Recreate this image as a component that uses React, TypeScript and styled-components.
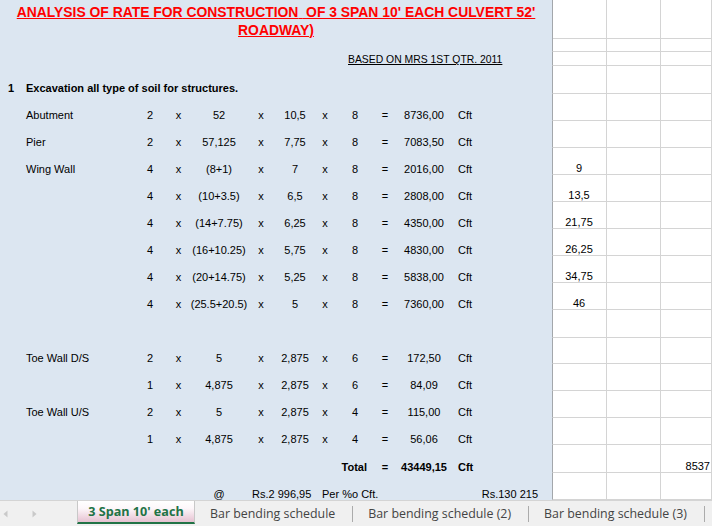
import React from "react";
import styled, { createGlobalStyle } from "styled-components";

const GlobalStyle = createGlobalStyle`
  html, body { margin: 0; padding: 0; background: #ffffff; }
  body {
    font-family: "Liberation Sans", Arial, sans-serif;
    font-size: 11px;
    color: #000000;
  }
  * { box-sizing: border-box; }
`;

const BAND_COLS =
  "22px 113px 30px 27px 54px 30px 38px 22px 38px 22px 56px 100px";

type Align = "left" | "center" | "right";
const justify = (a?: Align) =>
  a === "left" ? "flex-start" : a === "right" ? "flex-end" : "center";

const Window = styled.div`
  width: 712px;
  height: 526px;
  display: flex;
  flex-direction: column;
  overflow: hidden;
  background: #ffffff;
`;

const Sheet = styled.div`
  flex: 1;
  min-height: 0;
  display: flex;
  flex-direction: column;
  overflow: hidden;
`;

const Row = styled.div<{ $h: number }>`
  flex: none;
  height: ${(p) => p.$h}px;
  display: grid;
  grid-template-columns: 552px 55px 54px 1fr;
`;

const Band = styled.div`
  display: grid;
  grid-template-columns: ${BAND_COLS};
  grid-template-rows: 100%;
  align-items: end;
  background: #dce6f1;
  min-width: 0;
`;

const Cell = styled.div<{
  $col: string;
  $align?: Align;
  $bold?: boolean;
  $under?: boolean;
  $small?: boolean;
  $pl?: number;
  $pr?: number;
}>`
  grid-column: ${(p) => p.$col};
  grid-row: 1;
  display: flex;
  justify-content: ${(p) => justify(p.$align)};
  padding-left: ${(p) => p.$pl ?? 0}px;
  padding-right: ${(p) => p.$pr ?? 0}px;
  font-weight: ${(p) => (p.$bold ? 700 : 400)};
  font-size: ${(p) => (p.$small ? "10.4px" : "11px")};
  text-decoration: ${(p) => (p.$under ? "underline" : "none")};
  line-height: 12px;
  white-space: nowrap;
`;

const Title = styled.div`
  grid-column: 1 / 13;
  grid-row: 1;
  align-self: start;
  padding-top: 3px;
  text-align: center;
  color: #ff0000;
  font-weight: 700;
  font-size: 13.9px;
  line-height: 18px;
  text-decoration: underline;
`;

const GridCell = styled.div<{ $edge?: boolean; $align?: Align }>`
  display: flex;
  align-items: flex-end;
  justify-content: ${(p) => justify(p.$align)};
  border-left: ${(p) => (p.$edge ? "1px solid #a3a7ab" : "none")};
  border-right: 1px solid #d4d4d4;
  border-bottom: 1px solid #d4d4d4;
  padding: 0 1px 0 0;
  line-height: 12px;
  white-space: nowrap;
  overflow: hidden;
`;

const TabBar = styled.div`
  flex: none;
  height: 26px;
  display: flex;
  align-items: stretch;
  background: #f0f0f0;
  border-top: 1px solid #d4d4d4;
  font-family: "Open Sans", "Noto Sans", sans-serif;
  font-size: 12.4px;
`;

const Nav = styled.div`
  width: 77px;
  flex: none;
  display: flex;
  align-items: center;
  gap: 24px;
  padding: 0 0 0 3px;
`;

const ActiveTab = styled.div`
  flex: none;
  align-self: flex-start;
  width: 118px;
  height: 23px;
  display: flex;
  align-items: center;
  justify-content: center;
  background: linear-gradient(#ffffff 0%, #fdf7fa 35%, #e6c1d1 100%);
  border-left: 1px solid #c8c8c8;
  border-right: 1px solid #c8c8c8;
  border-bottom: 2px solid #217346;
  color: #217346;
  font-weight: 700;
  font-size: 12.6px;
  white-space: nowrap;
`;

const Tab = styled.div`
  flex: none;
  display: flex;
  align-items: center;
  padding: 0 17px 1px 15px;
  color: #444444;
  white-space: nowrap;
`;

const Sep = styled.div`
  flex: none;
  width: 1px;
  height: 16px;
  align-self: center;
  background: #ababab;
`;

const Arrow = ({ dir }: { dir: "l" | "r" }) => (
  <svg width="5" height="8" viewBox="0 0 5 8">
    <path
      d={dir === "l" ? "M4.5 0.5 L0.5 4 L4.5 7.5 Z" : "M0.5 0.5 L4.5 4 L0.5 7.5 Z"}
      fill="#c9c9c9"
    />
  </svg>
);

type Calc = {
  h: number;
  label?: string;
  n: string;
  a: string;
  b: string;
  c: string;
  res: string;
  side?: string;
};

const calcs: Calc[] = [
  { h: 27, label: "Abutment", n: "2", a: "52", b: "10,5", c: "8", res: "8736,00" },
  { h: 27, label: "Pier", n: "2", a: "57,125", b: "7,75", c: "8", res: "7083,50" },
  { h: 27, label: "Wing Wall", n: "4", a: "(8+1)", b: "7", c: "8", res: "2016,00", side: "9" },
  { h: 27, n: "4", a: "(10+3.5)", b: "6,5", c: "8", res: "2808,00", side: "13,5" },
  { h: 27, n: "4", a: "(14+7.75)", b: "6,25", c: "8", res: "4350,00", side: "21,75" },
  { h: 27, n: "4", a: "(16+10.25)", b: "5,75", c: "8", res: "4830,00", side: "26,25" },
  { h: 27, n: "4", a: "(20+14.75)", b: "5,25", c: "8", res: "5838,00", side: "34,75" },
  { h: 27, n: "4", a: "(25.5+20.5)", b: "5", c: "8", res: "7360,00", side: "46" },
];

const toeCalcs: Calc[] = [
  { h: 26, label: "Toe Wall D/S", n: "2", a: "5", b: "2,875", c: "6", res: "172,50" },
  { h: 27, n: "1", a: "4,875", b: "2,875", c: "6", res: "84,09" },
  { h: 27, label: "Toe Wall U/S", n: "2", a: "5", b: "2,875", c: "4", res: "115,00" },
  { h: 27, n: "1", a: "4,875", b: "2,875", c: "4", res: "56,06" },
];

const SideCells = ({ a, c }: { a?: string; c?: string }) => (
  <>
    <GridCell $edge>{a}</GridCell>
    <GridCell />
    <GridCell $align="right">{c}</GridCell>
  </>
);

const CalcRow = ({ r }: { r: Calc }) => (
  <Row $h={r.h}>
    <Band>
      {r.label && (
        <Cell $col="2" $align="left" $pl={4}>
          {r.label}
        </Cell>
      )}
      <Cell $col="3">{r.n}</Cell>
      <Cell $col="4">x</Cell>
      <Cell $col="5">{r.a}</Cell>
      <Cell $col="6">x</Cell>
      <Cell $col="7">{r.b}</Cell>
      <Cell $col="8">x</Cell>
      <Cell $col="9">{r.c}</Cell>
      <Cell $col="10">=</Cell>
      <Cell $col="11">{r.res}</Cell>
      <Cell $col="12" $align="left" $pl={6}>
        Cft
      </Cell>
    </Band>
    <SideCells a={r.side} />
  </Row>
);

export default function App() {
  return (
    <>
      <GlobalStyle />
      <Window>
        <Sheet>
          <Row $h={38}>
            <Band>
              <Title>
                ANALYSIS OF RATE FOR CONSTRUCTION{"\u00a0"} OF 3 SPAN 10' EACH
                CULVERT 52' ROADWAY)
              </Title>
            </Band>
            <SideCells />
          </Row>
          <Row $h={14}>
            <Band />
            <SideCells />
          </Row>
          <Row $h={14}>
            <Band>
              <Cell $col="8 / 13" $align="left" $pl={34} $under $small>
                BASED ON MRS 1ST QTR. 2011
              </Cell>
            </Band>
            <SideCells />
          </Row>
          <Row $h={28}>
            <Band>
              <Cell $col="1" $align="left" $pl={8} $bold>
                1
              </Cell>
              <Cell $col="2 / 13" $align="left" $pl={4} $bold>
                Excavation all type of soil for structures.
              </Cell>
            </Band>
            <SideCells />
          </Row>
          {calcs.map((r, i) => (
            <CalcRow key={"c" + i} r={r} />
          ))}
          <Row $h={28}>
            <Band />
            <SideCells />
          </Row>
          {toeCalcs.map((r, i) => (
            <CalcRow key={"t" + i} r={r} />
          ))}
          <Row $h={28}>
            <Band>
              <Cell $col="8 / 10" $align="right" $pr={7} $bold>
                Total
              </Cell>
              <Cell $col="10" $bold>
                =
              </Cell>
              <Cell $col="11" $bold>
                43449,15
              </Cell>
              <Cell $col="12" $align="left" $pl={6} $bold>
                Cft
              </Cell>
            </Band>
            <SideCells c="8537" />
          </Row>
          <Row $h={27}>
            <Band>
              <Cell $col="5">@</Cell>
              <Cell $col="6 / 8" $align="left" $pl={6}>
                Rs.2 996,95
              </Cell>
              <Cell $col="8 / 11" $align="left" $pl={8}>
                Per %o Cft.
              </Cell>
              <Cell $col="12" $align="right" $pr={14}>
                Rs.130 215
              </Cell>
            </Band>
            <SideCells />
          </Row>
        </Sheet>
        <TabBar>
          <Nav>
            <Arrow dir="l" />
            <Arrow dir="r" />
          </Nav>
          <ActiveTab>3 Span 10' each</ActiveTab>
          <Tab>Bar bending schedule</Tab>
          <Sep />
          <Tab>Bar bending schedule (2)</Tab>
          <Sep />
          <Tab>Bar bending schedule (3)</Tab>
          <Sep />
        </TabBar>
      </Window>
    </>
  );
}
